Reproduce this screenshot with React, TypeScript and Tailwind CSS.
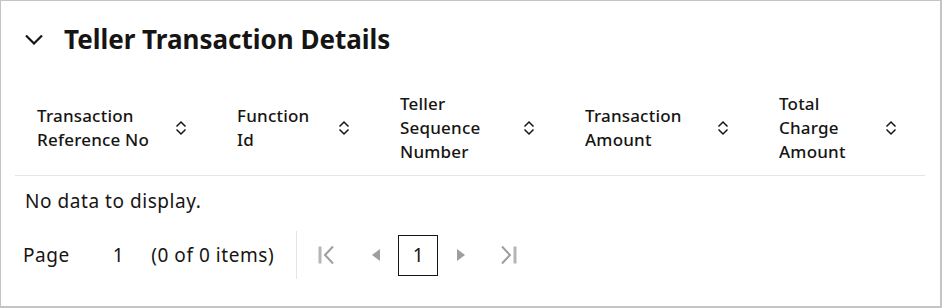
const columns = [
  { label: ['Transaction', 'Reference No'], width: 'w-[200px]' },
  { label: ['Function', 'Id'], width: 'w-[163px]' },
  { label: ['Teller', 'Sequence', 'Number'], width: 'w-[185px]' },
  { label: ['Transaction', 'Amount'], width: 'w-[194px]' },
  { label: ['Total', 'Charge', 'Amount'], width: 'w-[168px]' },
]

function SortIcon() {
  return (
    <svg width="12" height="16" viewBox="0 0 12 16" fill="none" stroke="#161513" strokeWidth="1.5">
      <path d="M1.5 6.5 6 2l4.5 4.5" />
      <path d="M1.5 9.5 6 14l4.5-4.5" />
    </svg>
  )
}

function PagerIcon({ kind }: { kind: 'first' | 'prev' | 'next' | 'last' }) {
  const c = '#9e9e9e'
  if (kind === 'first')
    return (
      <svg width="18" height="20" viewBox="0 0 18 20" fill="none" strokeWidth="2">
        <path d="M2 1.5v17" stroke="#b5b5b5" strokeWidth="3" />
        <path d="M15 1.5 7 10l8 8.5" stroke={c} />
      </svg>
    )
  if (kind === 'last')
    return (
      <svg width="18" height="20" viewBox="0 0 18 20" fill="none" strokeWidth="2">
        <path d="M16 1.5v17" stroke="#b5b5b5" strokeWidth="3" />
        <path d="M3 1.5l8 8.5-8 8.5" stroke={c} />
      </svg>
    )
  if (kind === 'prev')
    return (
      <svg width="8" height="12" viewBox="0 0 8 12" fill={c}>
        <path d="M8 0v12L0 6z" />
      </svg>
    )
  return (
    <svg width="8" height="12" viewBox="0 0 8 12" fill={c}>
      <path d="M0 0v12l8-6z" />
    </svg>
  )
}

export default function App() {
  return (
    <div className="w-[942px] h-[308px] bg-white border-l border-t border-r-2 border-b-2 border-[#c4c4c4] text-[#161513] font-['Noto_Sans',sans-serif] overflow-hidden">
      <div className="flex items-center h-[76px] pl-[24px]">
        <svg width="18" height="11" viewBox="0 0 18 11" fill="none" stroke="#161513" strokeWidth="2.2">
          <path d="M1 1.5l8 8 8-8" />
        </svg>
        <h2 className="ml-[21px] text-[26px] font-bold">Teller Transaction Details</h2>
      </div>

      <div className="mx-[14px] w-[910px]">
        <div className="flex h-[99px] border-b border-[#e5e5e5]">
          {columns.map((col) => (
            <div key={col.label.join(' ')} className={`${col.width} flex items-center justify-between pl-[22px] pr-[28px] pt-[4px]`}>
              <div className="text-[17px] leading-[24px] font-medium tracking-[0.2px]">
                {col.label.map((l) => (
                  <div key={l}>{l}</div>
                ))}
              </div>
              <SortIcon />
            </div>
          ))}
        </div>
      </div>

      <div className="pl-[24px] pt-[12px] text-[19px] leading-[26px] tracking-[0.55px]">No data to display.</div>

      <div className="flex items-center mt-[17px] pl-[22px] h-[48px] text-[19px] tracking-[0.55px]">
        <span>Page</span>
        <span className="ml-[43px]">1</span>
        <span className="ml-[27px]">(0 of 0 items)</span>
        <div className="ml-[22px] h-[48px] w-px bg-[#e5e5e5]" />
        <div className="flex items-center ml-[21px]">
          <PagerIcon kind="first" />
          <div className="ml-[36px]">
            <PagerIcon kind="prev" />
          </div>
          <div className="ml-[18px] w-[40px] h-[41px] border border-[#161513] flex items-center justify-center tracking-normal">1</div>
          <div className="ml-[19px]">
            <PagerIcon kind="next" />
          </div>
          <div className="ml-[34px]">
            <PagerIcon kind="last" />
          </div>
        </div>
      </div>
    </div>
  )
}
